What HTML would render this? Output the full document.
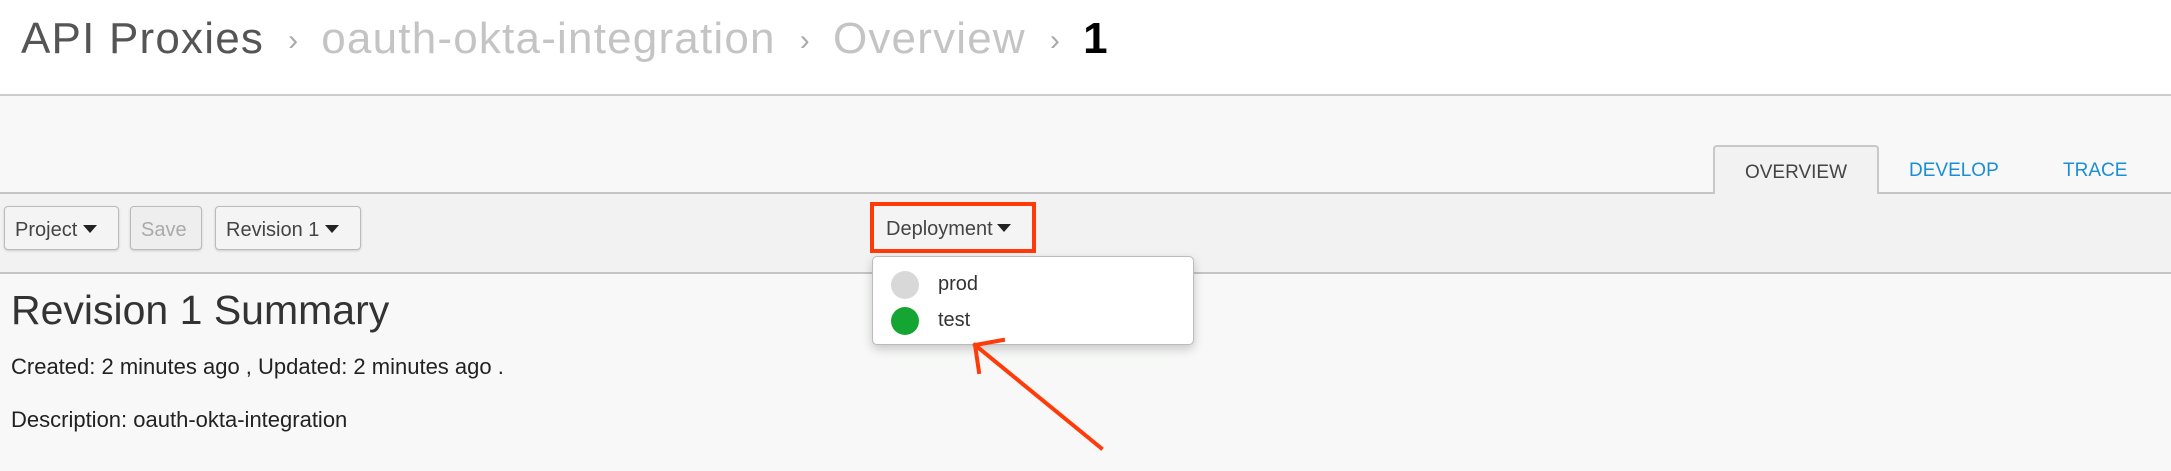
<!DOCTYPE html>
<html><head><meta charset="utf-8"><style>
body{margin:0;width:2171px;height:471px;position:relative;overflow:hidden;background:#f7f8f7;font-family:"Liberation Sans",sans-serif;}
.hdr{position:absolute;left:0;top:0;width:2171px;height:94px;background:#fff;border-bottom:2px solid #ccc;}
.crumb{position:absolute;left:21px;top:14px;font-size:44px;letter-spacing:1.2px;color:#555;white-space:nowrap;}
.crumb .g{color:#c4c4c4}
.crumb .s{color:#aaa;font-size:30px;margin:0 22px 0 24px;position:relative;top:-3px}
.crumb .b{color:#000;font-weight:bold}
.tabbar{position:absolute;left:0;top:192px;width:2171px;border-top:2px solid #c4c4c4;}
.tab{position:absolute;top:145px;height:49px;font-size:19px;line-height:52px;}
.tb{position:absolute;left:0;top:194px;width:2171px;height:78px;background:#f2f2f2;border-bottom:2px solid #c4c4c4;}
.btn{position:absolute;top:206px;height:44px;border:1px solid #bbb;border-radius:4px;background:#f4f4f4;box-shadow:0 1px 2px #ccc;font-size:20px;line-height:46px;color:#444;padding:0 10px;box-sizing:border-box;}
.car{display:inline-block;width:0;height:0;border-left:7px solid transparent;border-right:7px solid transparent;border-top:8px solid #222;margin-left:6px;vertical-align:3px}
</style></head><body>
<div class="hdr"><div class="crumb">API Proxies<span class="s">›</span><span class="g">oauth-okta-integration</span><span class="s">›</span><span class="g">Overview</span><span class="s">›</span><span class="b">1</span></div></div>
<div class="tabbar"></div>
<div class="tab" style="left:1713px;width:166px;background:#f2f2f2;border:2px solid #c8c8c8;border-bottom:none;border-radius:4px 4px 0 0;text-align:center;color:#444;box-sizing:border-box;">OVERVIEW</div>
<div class="tab" style="left:1909px;color:#1a8fd6">DEVELOP</div>
<div class="tab" style="left:2063px;color:#1a8fd6">TRACE</div>
<div class="tb"></div>
<div class="btn" style="left:4px;width:115px">Project<span class="car"></span></div>
<div class="btn" style="left:130px;width:72px;color:#aaa;background:#eee">Save</div>
<div class="btn" style="left:215px;width:146px">Revision 1<span class="car"></span></div>
<div style="position:absolute;left:870px;top:202px;width:166px;height:51px;border:4px solid #ff3b0a;box-sizing:border-box;background:#f4f4f4;font-size:20px;line-height:46px;color:#444;padding-left:12px">Deployment<span class="car" style="margin-left:4px"></span></div>
<div style="position:absolute;left:872px;top:256px;width:322px;height:89px;background:#fff;border:1px solid #bbb;border-radius:5px;box-sizing:border-box;box-shadow:0 4px 10px rgba(0,0,0,.2);">
<div style="position:absolute;left:18px;top:14px;width:28px;height:28px;border-radius:50%;background:#d8d8d8"></div>
<div style="position:absolute;left:65px;top:16px;font-size:20px;color:#333">prod</div>
<div style="position:absolute;left:18px;top:50px;width:28px;height:28px;border-radius:50%;background:#14a532"></div>
<div style="position:absolute;left:65px;top:52px;font-size:20px;color:#333">test</div>
</div>
<div style="position:absolute;left:11px;top:287px;font-size:41px;color:#333;font-weight:300">Revision 1 Summary</div>
<div style="position:absolute;left:11px;top:354px;font-size:22px;color:#222">Created: 2 minutes ago , Updated: 2 minutes ago .</div>
<div style="position:absolute;left:11px;top:407px;font-size:22px;color:#222">Description: oauth-okta-integration</div>
<svg style="position:absolute;left:0;top:0" width="2171" height="471"><g stroke="#ff3b0a" stroke-width="4" fill="none" stroke-linecap="square"><line x1="1101" y1="448" x2="975" y2="345"/><polyline points="1003,340 975,345 979,372"/></g></svg>
</body></html>
